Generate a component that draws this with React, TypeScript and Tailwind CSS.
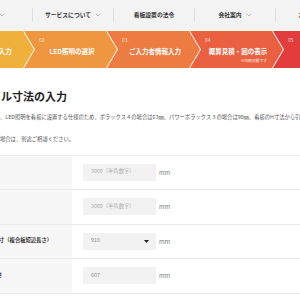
import React from "react";

const Chevron = () => (
  <svg width="6" height="4" viewBox="0 0 6 4" className="ml-[4px] shrink-0">
    <path d="M0.8 0.8 L3 3 L5.2 0.8" fill="none" stroke="#aaa" strokeWidth="0.8" />
  </svg>
);

const navItems: { t: string; chev: boolean }[] = [
  { t: "製品紹介", chev: true },
  { t: "サービスについて", chev: true },
  { t: "看板設置の法令", chev: false },
  { t: "会社案内", chev: true },
  { t: "お問い合わせ", chev: false },
];

const steps: { n: string; t: string; c: string; sub?: string }[] = [
  { n: "01", t: "看板サイズ入力", c: "bg-[#efb03c]" },
  { n: "02", t: "LED照明の選択", c: "bg-[#ef9640]" },
  { n: "03", t: "ご入力者情報入力", c: "bg-[#ec7c42]" },
  { n: "04", t: "概算見積・図の表示", c: "bg-[#ea6142]", sub: "※印刷可能です" },
  { n: "05", t: "お見積り依頼", c: "bg-[#e23c3d]" },
];

type Row = { label: string; kind: "ph" | "select" | "val"; v: string; off: string };
const rows: Row[] = [
  { label: "", kind: "ph", v: "3000（半角数字）", off: "" },
  { label: "", kind: "ph", v: "3000（半角数字）", off: "" },
  { label: "寸（複合板短辺長さ）", kind: "select", v: "910", off: "ml-[-1px]" },
  { label: "さ", kind: "val", v: "607", off: "ml-[-3px]" },
];

export default function App() {
  return (
    <div className="w-[300px] h-[300px] overflow-hidden bg-white font-['Noto_Sans_CJK_JP','Noto_Sans',sans-serif]">
      {/* nav */}
      <div className="h-[30px] bg-[#f3f3f3] flex items-center ml-[-48px] w-[400px]">
        {navItems.map((it, i) => (
          <React.Fragment key={i}>
            {i > 0 && <div className="w-px h-[14px] bg-[#dedede] shrink-0" />}
            <div
              className={`w-[80px] shrink-0 flex items-center text-[5.8px] font-bold text-[#333] whitespace-nowrap ${
                i === 0 ? "justify-end pr-[27px]" : "justify-center"
              }`}
            >
              <span>{it.t}</span>
              {it.chev && <Chevron />}
            </div>
          </React.Fragment>
        ))}
      </div>
      {/* steps */}
      <div className="mt-px h-[37px] flex ml-[-59px] w-[480px]">
        {steps.map((s, i) => (
          <div
            key={i}
            className={`${s.c} w-[93px] h-[37px] shrink-0 flex flex-col text-white [clip-path:polygon(0_0,82px_0,100%_50%,82px_100%,0_100%,11px_50%)] ${i > 0 ? "ml-[-10px]" : ""}`}
          >
            <div className="pt-[6px] pl-[15px] text-[5px] leading-[6px] text-white/75">{s.n}</div>
            <div className="mt-[4px] text-center text-[6.5px] leading-[8px] font-bold whitespace-nowrap pl-[3px]">{s.t}</div>
            {s.sub && (
              <div className="mt-[3px] text-right pr-[16px] text-[3.8px] leading-[5px] text-white/90">{s.sub}</div>
            )}
          </div>
        ))}
      </div>
      {/* title */}
      <div className="mt-[21px] pl-px text-[11px] leading-[14px] font-bold text-[#222] whitespace-nowrap">ル寸法の入力</div>
      <div className="mt-[10.5px] text-[5.3px] leading-[7px] text-[#555] whitespace-nowrap">
        、LED照明を看板に設置する仕様のため、ボラックス４の場合は63㎜、パワーボラックス３の場合は90㎜、看板のH寸法から引いた寸法で
      </div>
      <div className="mt-[15.5px] text-[5.3px] leading-[7px] text-[#555] whitespace-nowrap">
        場合は、別途ご相談ください。
      </div>
      {/* table */}
      <div className="mt-[11.5px] border-t border-[#ebebeb]">
        {rows.map((r, i) => (
          <div key={i} className="h-[34.5px] border-b border-[#ebebeb] flex">
            <div className="w-[72px] shrink-0 bg-[#f7f7f7] flex items-center overflow-hidden">
              <span className={`${r.off} text-[5.3px] font-bold text-[#333] whitespace-nowrap`}>{r.label}</span>
            </div>
            <div className="flex-1 flex items-center pl-[11px]">
              <div className="w-[73px] h-[17px] bg-[#f2f2f2] flex items-center justify-between pl-[8px] pr-[7px]">
                <span className={`text-[5.3px] ${r.kind === "ph" ? "text-[#b0b0b0]" : "text-[#888]"}`}>{r.v}</span>
                {r.kind === "select" && (
                  <svg width="5" height="3" viewBox="0 0 5 3">
                    <path d="M0 0 L5 0 L2.5 3 Z" fill="#222" />
                  </svg>
                )}
              </div>
              <span className="ml-[3px] text-[6px] text-[#777]">mm</span>
            </div>
          </div>
        ))}
      </div>
    </div>
  );
}
